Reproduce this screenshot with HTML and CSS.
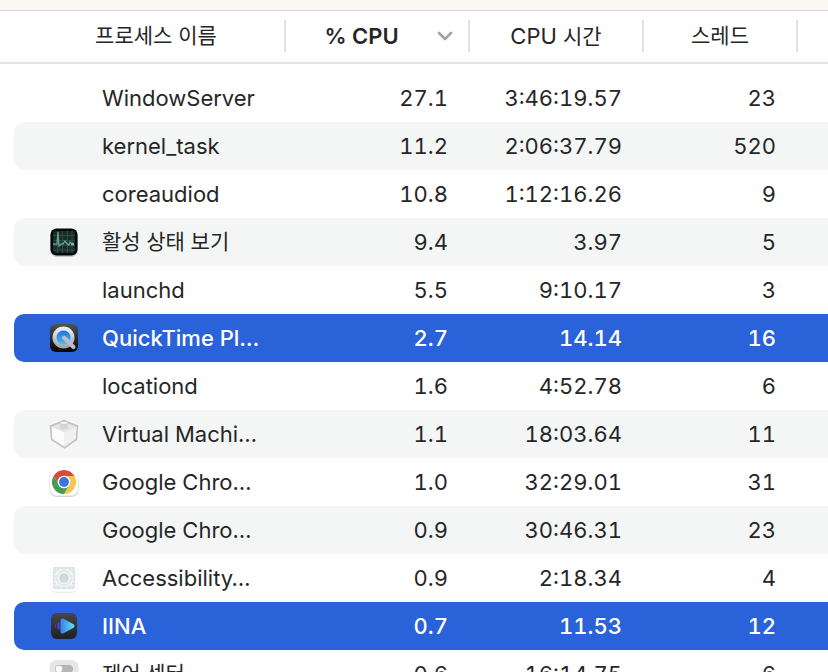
FILE: index.html
```
<!DOCTYPE html>
<html lang="ko">
<head>
  <meta charset="UTF-8">
  <title>활성 상태 보기</title>
  <link rel="stylesheet" href="styles.css">
</head>
<body>
  <div class="toolbar"></div>
  <table class="process-table">
    <colgroup>
      <col class="col-name">
      <col class="col-cpu">
      <col class="col-time">
      <col class="col-threads">
      <col>
    </colgroup>
    <thead>
      <tr>
        <th class="name-head"><button class="sort ko">프로세스 이름</button></th>
        <th aria-sort="descending">
          <button class="sort active">
            <span class="sort-label">% CPU</span>
            <svg class="chevron" viewBox="0 0 16 10" width="16" height="10"><path d="M2 2l6 6 6-6" fill="none" stroke="#a3a3a3" stroke-width="2.6" stroke-linecap="round" stroke-linejoin="round"/></svg>
          </button>
        </th>
        <th><button class="sort">CPU <span class="ko">시간</span></button></th>
        <th><button class="sort ko">스레드</button></th>
        <th></th>
      </tr>
    </thead>
    <tbody>
      <tr>
        <td><div class="process"><span class="icon"></span>WindowServer</div></td>
        <td>27.1</td><td>3:46:19.57</td><td>23</td><td></td>
      </tr>
      <tr>
        <td><div class="process"><span class="icon"></span>kernel_task</div></td>
        <td>11.2</td><td>2:06:37.79</td><td>520</td><td></td>
      </tr>
      <tr>
        <td><div class="process"><span class="icon"></span>coreaudiod</div></td>
        <td>10.8</td><td>1:12:16.26</td><td>9</td><td></td>
      </tr>
      <tr>
        <td>
          <div class="process">
            <svg class="icon" viewBox="0 0 32 32">
              <rect x="2" y="3" width="28" height="28" rx="7" fill="#000" opacity=".2"/>
              <rect x="2.500" y="2.500" width="27" height="27" rx="6" fill="#060807"/>
              <rect x="5" y="5" width="22" height="22" rx="3" fill="#182b27"/>
              <path d="M9.500 5v22M14.500 5v22M19.500 5v22M24 5v22M5 9.500h22M5 14.500h22M5 19.500h22M5 24h22" stroke="#2e4a44" stroke-width="1"/>
              <path d="M5 18h4l1-12 1 14 2-2h2l2-3 2 3 2 1 1-3 2 2h2" fill="none" stroke="#5f9f90" stroke-width="1.400"/>
              <circle cx="24.500" cy="18" r="1.500" fill="#7fbfae"/>
            </svg>
            <span class="ko">활성 상태 보기</span>
          </div>
        </td>
        <td>9.4</td><td>3.97</td><td>5</td><td></td>
      </tr>
      <tr>
        <td><div class="process"><span class="icon"></span>launchd</div></td>
        <td>5.5</td><td>9:10.17</td><td>3</td><td></td>
      </tr>
      <tr class="selected">
        <td>
          <div class="process">
            <svg class="icon" viewBox="0 0 32 32">
              <defs>
                <linearGradient id="qtBack" x2="0" y2="1"><stop stop-color="#505255"/><stop offset="1" stop-color="#050506"/></linearGradient>
                <linearGradient id="qtRing" x2="0" y2="1"><stop stop-color="#e8edfa"/><stop offset="1" stop-color="#a4a6ac"/></linearGradient>
                <linearGradient id="qtBlue" x2="0" y2="1"><stop stop-color="#1768cf"/><stop offset="1" stop-color="#52c8fa"/></linearGradient>
              </defs>
              <rect x="2" y="2" width="28" height="28" rx="6" fill="url(#qtBack)"/>
              <circle cx="15.500" cy="15.500" r="9" fill="url(#qtBlue)" stroke="url(#qtRing)" stroke-width="4"/>
              <path d="M16 15.500l9.500 9.500" stroke="#b9bfc8" stroke-width="4" stroke-linecap="round"/>
            </svg>
            QuickTime Pl…
          </div>
        </td>
        <td>2.7</td><td>14.14</td><td>16</td><td></td>
      </tr>
      <tr>
        <td><div class="process"><span class="icon"></span>locationd</div></td>
        <td>1.6</td><td>4:52.78</td><td>6</td><td></td>
      </tr>
      <tr>
        <td>
          <div class="process">
            <svg class="icon" viewBox="0 0 32 32">
              <path d="M2.500 8l9-3.500 4.500-2 4.500 2 9 3.500-1 13.500L16.500 30 3.500 21.500z" fill="#e6e6e6" stroke="#bdbdbd" stroke-width="1.400" stroke-linejoin="round"/>
              <path d="M4 9.500l12.500 5v13.500L4.500 20.500z" fill="#fbfbfb"/>
              <path d="M28.500 9.500l-12 5v13.500L27.500 20.500z" fill="#f0f0f0"/>
              <path d="M12 5v5c0 2 8 2 8 0V5z" fill="#d6d6d6"/>
              <ellipse cx="16" cy="5" rx="4" ry="1.800" fill="#f2f2f2" stroke="#c8c8c8" stroke-width=".8"/>
            </svg>
            Virtual Machi…
          </div>
        </td>
        <td>1.1</td><td>18:03.64</td><td>11</td><td></td>
      </tr>
      <tr>
        <td>
          <div class="process">
            <svg class="icon" viewBox="0 0 32 32">
              <rect x="1.500" y="2" width="29" height="29" rx="7" fill="#d6d6d6"/>
              <rect x="2" y="1.500" width="28" height="28" rx="6.500" fill="#fff" stroke="#ececec" stroke-width=".6"/>
              <path d="M5.600 10a12 12 0 0 1 20.800 0H16l-5.200 9z" fill="#d84a3c"/>
              <path d="M26.400 10A12 12 0 0 1 16 28l5.200-9L16 10z" fill="#f5c64c"/>
              <path d="M16 28A12 12 0 0 1 5.600 10l5.200 9 10.400 0z" fill="#459b50"/>
              <circle cx="16" cy="16" r="6.300" fill="#fff"/>
              <circle cx="16" cy="16" r="5" fill="#3b74df"/>
            </svg>
            Google Chro…
          </div>
        </td>
        <td>1.0</td><td>32:29.01</td><td>31</td><td></td>
      </tr>
      <tr>
        <td><div class="process"><span class="icon"></span>Google Chro…</div></td>
        <td>0.9</td><td>30:46.31</td><td>23</td><td></td>
      </tr>
      <tr>
        <td>
          <div class="process">
            <svg class="icon" viewBox="0 0 32 32">
              <rect x="2" y="3" width="28" height="28" rx="6.500" fill="#e9e9e9"/>
              <rect x="2" y="2" width="28" height="28" rx="6.500" fill="#fff" stroke="#f4f4f4" stroke-width=".6"/>
              <rect x="5" y="5" width="22" height="22" rx="1.500" fill="#d6e0e2"/>
              <path d="M5 9h22M5 23h22M9 5v22M23 5v22M5 5l22 22M27 5L5 27M12 5v22M20 5v22M5 12h22M5 20h22" stroke="#eff4f4" stroke-width=".9"/>
              <circle cx="16" cy="16" r="9" fill="none" stroke="#f4f8f8" stroke-width="1.200"/>
              <circle cx="16" cy="16" r="5.500" fill="#cfdadc" stroke="#f4f7f7" stroke-width="1.400"/>
            </svg>
            Accessibility…
          </div>
        </td>
        <td>0.9</td><td>2:18.34</td><td>4</td><td></td>
      </tr>
      <tr class="selected">
        <td>
          <div class="process">
            <svg class="icon" viewBox="0 0 32 32">
              <defs>
                <linearGradient id="iinaBack" x2="0" y2="1"><stop stop-color="#464648"/><stop offset="1" stop-color="#202022"/></linearGradient>
                <linearGradient id="iinaPlay"><stop stop-color="#3b8cf0"/><stop offset="1" stop-color="#5cd6ee"/></linearGradient>
              </defs>
              <rect x="3" y="3" width="26" height="26" rx="6" fill="url(#iinaBack)"/>
              <path d="M7.500 14.500v3" stroke="#4b32a8" stroke-width="1.500" stroke-linecap="round"/>
              <path d="M10.500 13.500v5" stroke="#5440df" stroke-width="2" stroke-linecap="round"/>
              <path d="M14.500 10.500v11l10-5.500z" fill="url(#iinaPlay)" stroke="url(#iinaPlay)" stroke-width="4" stroke-linejoin="round"/>
            </svg>
            IINA
          </div>
        </td>
        <td>0.7</td><td>11.53</td><td>12</td><td></td>
      </tr>
      <tr>
        <td>
          <div class="process">
            <svg class="icon" viewBox="0 0 32 32">
              <rect x="1.500" y="2" width="29" height="29" rx="6.500" fill="#e6e6e6"/>
              <rect x="7" y="7" width="18" height="8" rx="4" fill="#b5b5b5"/>
              <circle cx="11" cy="11" r="3.300" fill="#fff"/>
              <rect x="7" y="18" width="18" height="8" rx="4" fill="#b5b5b5"/>
              <circle cx="21" cy="22" r="3.300" fill="#fff"/>
            </svg>
            <span class="ko">제어 센터</span>
          </div>
        </td>
        <td>0.6</td><td>16:14.75</td><td>6</td><td></td>
      </tr>
    </tbody>
  </table>
</body>
</html>
```
FILE: styles.css
```
body {
  margin: 0;
  height: 100vh;
  overflow: hidden;
  background: #fff;
  color: #262626;
  font-family: Inter, "Noto Sans CJK KR", sans-serif;
  font-size: 22px;
  line-height: 32px;
}
.toolbar {
  height: 10px;
  background: #fcf8f4;
  border-bottom: 1px solid #d9d5d3;
}
.process-table {
  width: 100%;
  table-layout: fixed;
  border-collapse: separate;
  border-spacing: 0;
}
.col-name {
  width: 286px;
}
.col-cpu {
  width: 184px;
}
.col-time {
  width: 174px;
}
.col-threads {
  width: 154px;
}
.ko {
  font-size: 21px;
}

/* header */
th {
  padding: 9px 0 10px;
  border-bottom: 2px solid #e4e4e4;
  font-weight: 400;
}
.sort {
  display: block;
  width: 100%;
  height: 32px;
  padding: 0;
  border: 0;
  border-right: 2px solid #e2e2e2;
  background: none;
  color: inherit;
  font-family: inherit;
  font-size: 22px;
  line-height: 32px;
  cursor: pointer;
}
.sort.ko {
  font-size: 21px;
}
.name-head .sort {
  padding-left: 28px;
}
.sort.active {
  display: flex;
  align-items: center;
  padding-right: 15px;
  font-weight: 600;
}
.sort-label {
  flex: 1;
}

/* rows */
tbody::before {
  content: "";
  display: block;
  height: 10px;
}
td {
  height: 48px;
  padding: 0 22px 0 0;
  text-align: right;
  white-space: nowrap;
  font-variant-numeric: tabular-nums;
}
/* the transparent border keeps the rounded row clear of the window edge */
td:first-child {
  padding: 0 0 0 34px;
  border-left: 14px solid transparent;
  border-radius: 24px 0 0 24px / 10px 0 0 10px;
  background-clip: padding-box;
  text-align: left;
}
tbody tr:nth-child(even) td {
  background-color: #f4f6f5;
}
tbody tr.selected td {
  background-color: #2962d9;
  color: #fff;
  font-weight: 500;
}
.process {
  display: flex;
  align-items: center;
  gap: 22px;
}
.icon {
  flex: none;
  width: 32px;
  height: 32px;
}
```
